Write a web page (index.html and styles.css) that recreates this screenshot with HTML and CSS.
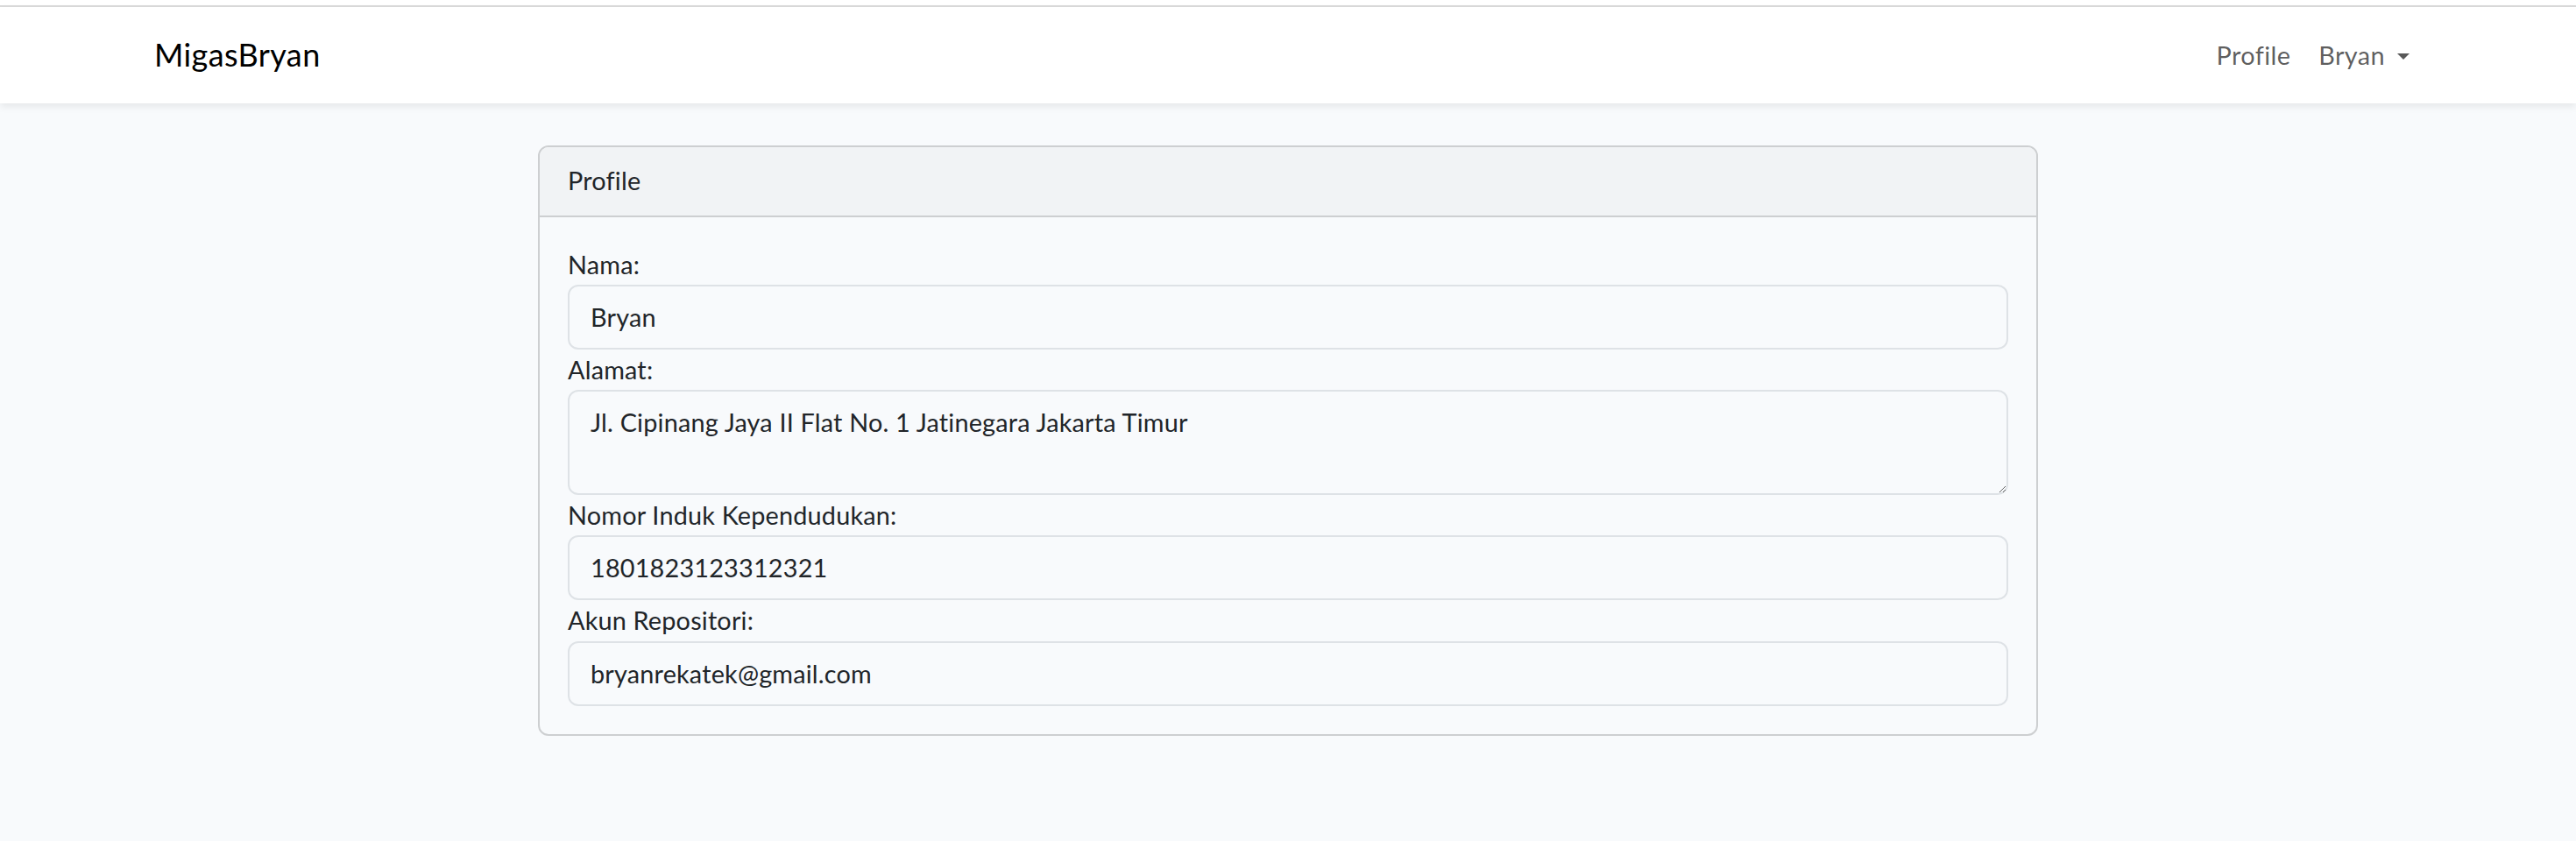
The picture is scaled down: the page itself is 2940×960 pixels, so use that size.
FILE: index.html
```html
<!DOCTYPE html>
<html lang="id">
<head>
<meta charset="utf-8">
<title>MigasBryan</title>
<link rel="stylesheet" href="styles.css">
</head>
<body>
<div class="topline"></div>
<nav class="navbar">
  <div class="container nav-inner">
    <a class="brand" href="#">MigasBryan</a>
    <ul class="nav-links">
      <li><a class="nav-link" href="#">Profile</a></li>
      <li><a class="nav-link dropdown" href="#">Bryan<span class="caret"></span></a></li>
    </ul>
  </div>
</nav>
<main class="main">
  <div class="container row">
    <div class="col">
      <div class="card">
        <div class="card-header">Profile</div>
        <div class="card-body">
          <label class="label" for="nama">Nama:</label>
          <input class="form-control" id="nama" type="text" value="Bryan">
          <label class="label" for="alamat">Alamat:</label>
          <textarea class="form-control textarea" id="alamat">Jl. Cipinang Jaya II Flat No. 1 Jatinegara Jakarta Timur</textarea>
          <label class="label" for="nik">Nomor Induk Kependudukan:</label>
          <input class="form-control" id="nik" type="text" value="1801823123312321">
          <label class="label" for="akun">Akun Repositori:</label>
          <input class="form-control" id="akun" type="text" value="bryanrekatek@gmail.com">
        </div>
      </div>
    </div>
  </div>
</main>
</body>
</html>
```
FILE: styles.css
```css
* { box-sizing: border-box; }
html, body { margin: 0; padding: 0; }
body {
  font-family: Lato, "Noto Sans", sans-serif;
  font-size: 28.8px;
  line-height: 1.6;
  letter-spacing: 0.2px;
  color: #212529;
  background: #f8fafc;
}
.topline {
  height: 8px;
  background: #fff;
  border-bottom: 2px solid #dadada;
}
.navbar {
  background: #fff;
  box-shadow: 0 4px 8px rgba(0,0,0,.075);
  padding: 16px 0;
  position: relative;
}
.container {
  max-width: 2640px;
  margin: 0 auto;
  padding: 0 24px;
}
.nav-inner {
  display: flex;
  align-items: center;
  justify-content: space-between;
}
.brand {
  font-size: 36px;
  line-height: 1.6;
  letter-spacing: 0.4px;
  padding: 10px 0;
  color: #000;
  text-decoration: none;
  margin-left: 2px;
}
.nav-links {
  list-style: none;
  margin: 0;
  padding: 0;
  display: flex;
}
.nav-link {
  display: flex;
  align-items: center;
  padding: 16px 16px;
  color: rgba(0,0,0,.65);
  text-decoration: none;
  letter-spacing: 0.4px;
}
.caret {
  display: inline-block;
  margin-left: 14px;
  margin-top: 2px;
  border-top: 7px solid currentColor;
  border-left: 7px solid transparent;
  border-right: 7px solid transparent;
}
.main { padding: 48px 0; }
.row { display: flex; justify-content: center; }
.col { width: 1712px; }
.card {
  border: 2px solid #cdcfd1;
  border-radius: 12px;
  background: #f8fafc;
  overflow: hidden;
}
.card-header {
  padding: 15px 32px 17px;
  background: #f1f3f5;
  border-bottom: 2px solid #cdcfd1;
}
.card-body {
  padding: 31px 32px 32px;
}
.label { display: block; }
.form-control {
  display: block;
  width: 100%;
  font: inherit;
  letter-spacing: inherit;
  color: #212529;
  line-height: 1.6;
  padding: 12px 24px;
  border: 2px solid #dee2e6;
  border-radius: 12px;
  background: #f8fafc;
  outline: none;
}
.textarea {
  height: 120px;
  resize: vertical;
}
```
